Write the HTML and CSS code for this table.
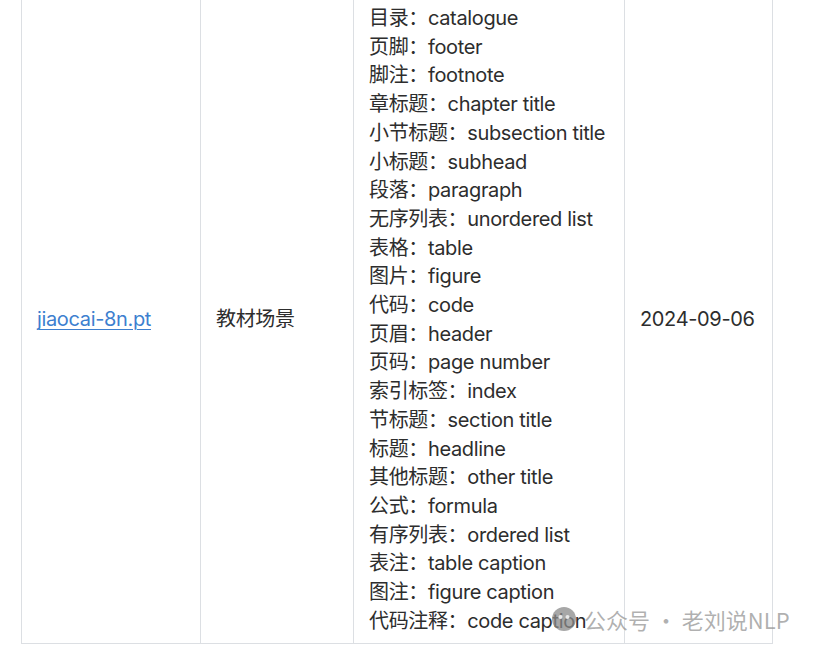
FILE: index.html
```html
<!DOCTYPE html>
<html lang="zh">
<head>
<meta charset="utf-8">
<link rel="stylesheet" href="styles.css">
</head>
<body>
<div class="page">
  <table class="grid">
    <colgroup>
      <col class="c1"><col class="c2"><col class="c3"><col class="c4">
    </colgroup>
    <tbody>
      <tr>
        <td class="cell"><a class="link" href="#">jiaocai-8n.pt</a></td>
        <td class="cell">教材场景</td>
        <td class="cell list">
          <div>目录：catalogue</div>
          <div>页脚：footer</div>
          <div>脚注：footnote</div>
          <div>章标题：chapter title</div>
          <div>小节标题：subsection title</div>
          <div>小标题：subhead</div>
          <div>段落：paragraph</div>
          <div>无序列表：unordered list</div>
          <div>表格：table</div>
          <div>图片：figure</div>
          <div>代码：code</div>
          <div>页眉：header</div>
          <div>页码：page number</div>
          <div>索引标签：index</div>
          <div>节标题：section title</div>
          <div>标题：headline</div>
          <div>其他标题：other title</div>
          <div>公式：formula</div>
          <div>有序列表：ordered list</div>
          <div>表注：table caption</div>
          <div>图注：figure caption</div>
          <div>代码注释：code caption</div>
        </td>
        <td class="cell">2024-09-06</td>
      </tr>
    </tbody>
  </table>
  <div class="watermark">
    <svg class="wm-icon" width="24" height="24" viewBox="0 0 24 24">
      <circle cx="12" cy="12" r="12" fill="#8a8a8a" fill-opacity="0.75"/>
      <circle cx="8.5" cy="10" r="2" fill="#e8e8e8"/>
      <circle cx="15.5" cy="10" r="2" fill="#e8e8e8"/>
    </svg>
    <span class="wm-text">公众号 · 老刘说NLP</span>
  </div>
</div>
</body>
</html>
```
FILE: styles.css
```css
html, body {
  margin: 0;
  padding: 0;
  background: #ffffff;
}
.page {
  position: relative;
  width: 814px;
  height: 652px;
  overflow: hidden;
  padding-left: 21px;
  box-sizing: border-box;
  font-family: "Inter", "Noto Sans CJK SC", sans-serif;
  font-size: 20px;
  letter-spacing: -0.35px;
  color: #2d2d2d;
}
.grid {
  border-collapse: collapse;
  table-layout: fixed;
  width: 751px;
}
.c1 { width: 179px; }
.c2 { width: 153px; }
.c3 { width: 271px; }
.c4 { width: 148px; }
.cell {
  border: 1px solid #dcdfe3;
  border-top: none;
  padding: 4px 15px 8px 15px;
  vertical-align: middle;
  line-height: 28.7px;
  white-space: nowrap;
}
.link {
  color: #3d7fcf;
  text-decoration: underline;
  text-underline-offset: 3px;
  text-decoration-thickness: 1px;
}
.watermark {
  position: absolute;
  left: 552px;
  top: 606px;
  display: flex;
  align-items: center;
  gap: 8px;
}
.wm-icon {
  display: block;
}
.wm-text {
  font-family: "Noto Sans CJK SC", "Inter", sans-serif;
  font-size: 22px;
  letter-spacing: 0;
  color: rgba(150, 150, 150, 0.75);
  line-height: 26px;
}
```
